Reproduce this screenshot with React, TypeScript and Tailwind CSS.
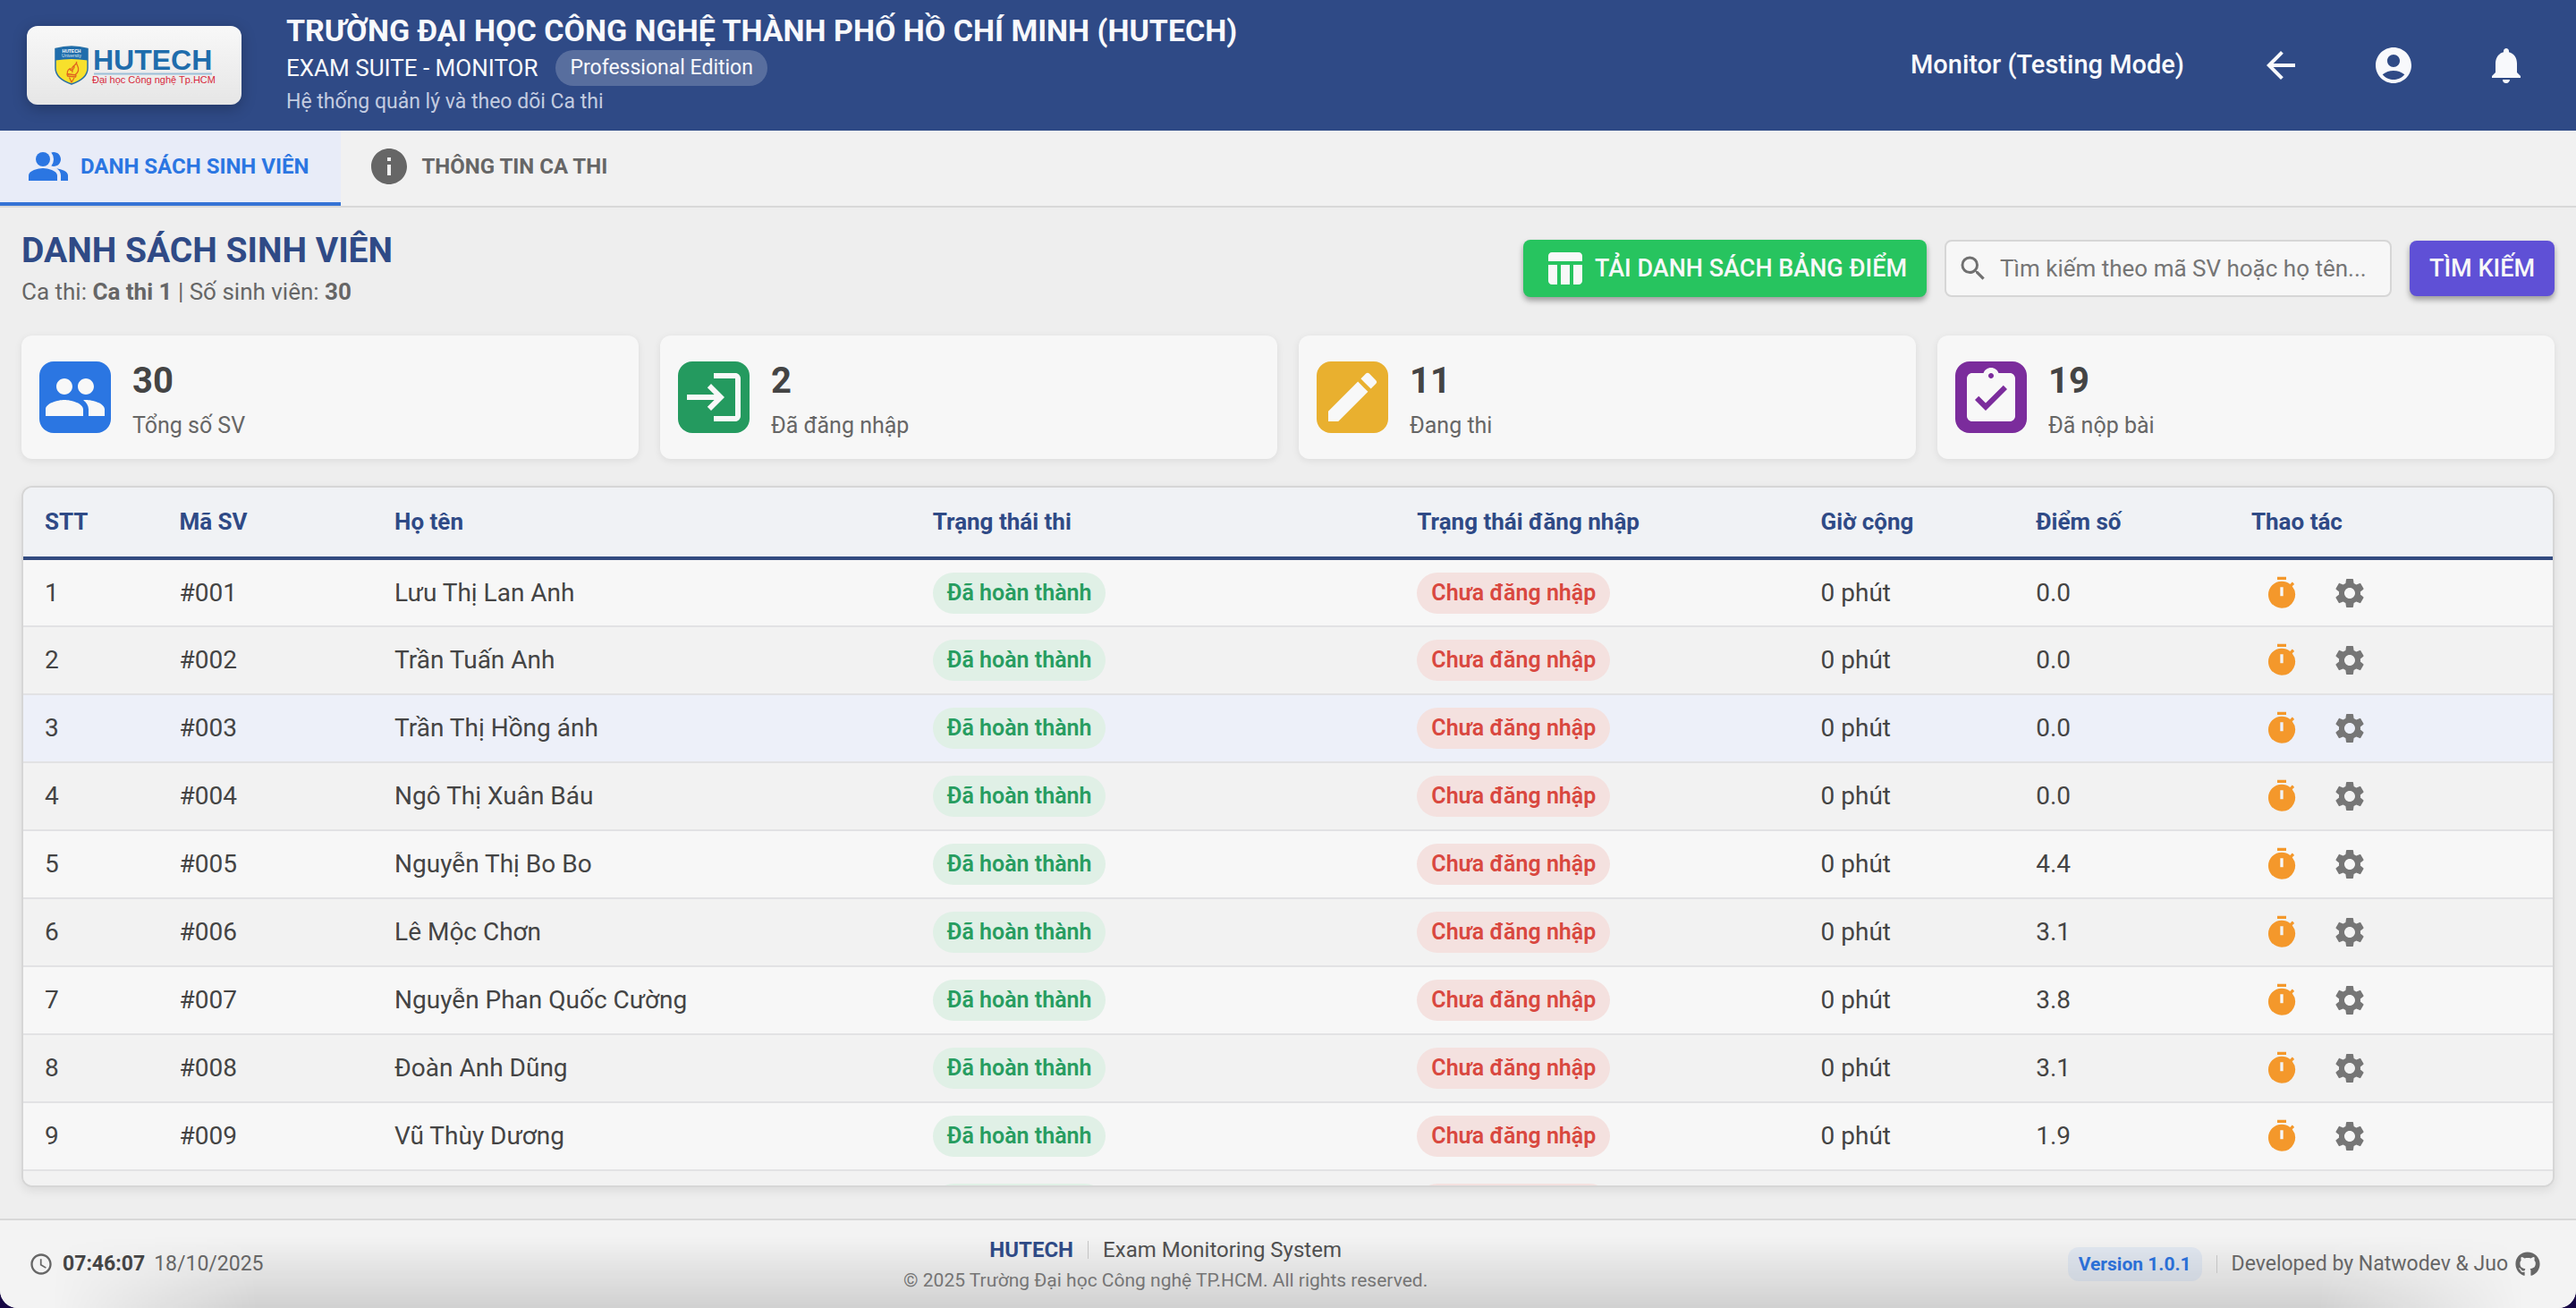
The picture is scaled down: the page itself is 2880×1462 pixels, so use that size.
import React from "react";
import {
  MdAccountCircle,
  MdArrowBack,
  MdAssignmentTurnedIn,
  MdEdit,
  MdInfo,
  MdLogin,
  MdNotifications,
  MdPeople,
  MdPeopleAlt,
  MdSchedule,
  MdSearch,
  MdSettings,
  MdTableChart,
  MdTimer,
} from "react-icons/md";
import { FaGithub } from "react-icons/fa";

type Student = { id: number; name: string; score: string };

const students: Student[] = [
  { id: 1, name: "Lưu Thị Lan Anh", score: "0.0" },
  { id: 2, name: "Trần Tuấn Anh", score: "0.0" },
  { id: 3, name: "Trần Thị Hồng ánh", score: "0.0" },
  { id: 4, name: "Ngô Thị Xuân Báu", score: "0.0" },
  { id: 5, name: "Nguyễn Thị Bo Bo", score: "4.4" },
  { id: 6, name: "Lê Mộc Chơn", score: "3.1" },
  { id: 7, name: "Nguyễn Phan Quốc Cường", score: "3.8" },
  { id: 8, name: "Đoàn Anh Dũng", score: "3.1" },
  { id: 9, name: "Vũ Thùy Dương", score: "1.9" },
  { id: 10, name: "", score: "" },
];

const columns = [
  { label: "STT", width: "w-[5%]" },
  { label: "Mã SV", width: "w-[8%]" },
  { label: "Họ tên", width: "w-[20%]" },
  { label: "Trạng thái thi", width: "w-[18%]" },
  { label: "Trạng thái đăng nhập", width: "w-[15%]" },
  { label: "Giờ cộng", width: "w-[8%]" },
  { label: "Điểm số", width: "w-[8%]" },
  { label: "Thao tác", width: "w-[12%]" },
];

const stats = [
  { value: 30, label: "Tổng số SV", color: "bg-[#2b76e2]", Icon: MdPeople },
  { value: 2, label: "Đã đăng nhập", color: "bg-[#249a5f]", Icon: MdLogin },
  { value: 11, label: "Đang thi", color: "bg-[#e9b02f]", Icon: MdEdit },
  { value: 19, label: "Đã nộp bài", color: "bg-[#7b2c9c]", Icon: MdAssignmentTurnedIn },
];

function Logo() {
  return (
    <div className="flex h-[88px] w-[240px] items-center justify-center rounded-xl bg-linear-to-b from-[#f8f8f8] to-[#e6e6e6] shadow-[0_4px_16px_rgba(0,0,0,0.25)]">
      <svg
        viewBox="0 0 178 44"
        className="h-11 w-[178px] overflow-visible"
        role="img"
        aria-label="HUTECH - Đại học Công nghệ Tp.HCM"
      >
        <path d="M1 3.500Q19-1.500 37 3.500V25Q37 37 19 43Q1 37 1 25Z" fill="#f7e02c" stroke="#2a6fa3" strokeWidth="1.500" />
        <path d="M1 3.500Q19-1.500 37 3.500V16.500Q19 13.500 1 16.500Z" fill="#1f6dac" />
        <text x="19" y="8" textAnchor="middle" fontFamily="Liberation Sans, sans-serif" fontWeight="700" fontSize="5" fill="#fff">HUTECH</text>
        <text x="19" y="13" textAnchor="middle" fontFamily="Liberation Sans, sans-serif" fontSize="5" fill="#dbe8f3">University</text>
        <path d="M24.500 18c1.500 3-5.500 4.500-5.500 8.500 0 2-2.500 1-1.500-1-3 1.500-4.500 5-2 7.500M24.500 18c-1 3 3.500 5.500 2 10-.5 2-2 3.500-3.500 4.500M22 23c1 2.500-3.500 3.500-2 7M14 31.500l10 1.500-.5 2-9-1zM16.500 35.500l2.500 5.500 3-5" fill="none" stroke="#e0661f" strokeWidth="1.300" strokeLinejoin="round" />
        <text x="43" y="27" fontFamily="Liberation Sans, sans-serif" fontWeight="700" fontSize="32" fill="#1f6dac">HUTECH</text>
        <rect x="44" y="30.500" width="132" height="2" fill="#9dbfd8" />
        <text x="42" y="41.500" fontFamily="Liberation Sans, sans-serif" fontSize="11" fill="#d8283a">Đại học Công nghệ Tp.HCM</text>
      </svg>
    </div>
  );
}

function Header() {
  return (
    <header className="flex h-[146px] shrink-0 items-center justify-between bg-[#2f4a86] px-[30px] text-[#f8f9fc]">
      <div className="flex items-center gap-[50px]">
        <Logo />
        <div className="flex flex-col pb-0.5">
          <h1 className="text-[34px] leading-[44px] font-bold">
            TRƯỜNG ĐẠI HỌC CÔNG NGHỆ THÀNH PHỐ HỒ CHÍ MINH (HUTECH)
          </h1>
          <div className="flex items-center gap-5">
            <span className="text-[26px]">EXAM SUITE - MONITOR</span>
            <span className="rounded-full bg-white/20 px-4 text-[23px] leading-[40px]">Professional Edition</span>
          </div>
          <p className="text-[23px] leading-9 text-[#c3cce0]">Hệ thống quản lý và theo dõi Ca thi</p>
        </div>
      </div>
      <div className="flex items-center gap-[30px]">
        <span className="mr-[30px] text-[29px] font-medium">Monitor (Testing Mode)</span>
        <button type="button" aria-label="Quay lại" className="p-6">
          <MdArrowBack className="size-12" />
        </button>
        <button type="button" aria-label="Tài khoản" className="p-6">
          <MdAccountCircle className="size-12" />
        </button>
        <button type="button" aria-label="Thông báo" className="p-6">
          <MdNotifications className="size-12" />
        </button>
      </div>
    </header>
  );
}

function Tabs() {
  return (
    <nav role="tablist" className="flex h-[86px] shrink-0 border-b-2 border-[#d8d8d8] bg-[#f1f1f1] text-2xl font-bold">
      <button
        type="button"
        role="tab"
        aria-selected="true"
        className="flex items-center gap-3 border-b-4 border-[#3573d5] bg-[#e8ecf8] pr-9 pl-[30px] text-[#2b76e2]"
      >
        <MdPeopleAlt className="size-12" />
        DANH SÁCH SINH VIÊN
      </button>
      <button
        type="button"
        role="tab"
        aria-selected="false"
        className="flex items-center gap-3 border-b-4 border-transparent pr-9 pl-[30px] text-[#666666]"
      >
        <MdInfo className="size-12" />
        THÔNG TIN CA THI
      </button>
    </nav>
  );
}

function Toolbar() {
  return (
    <div className="flex items-center justify-between">
      <div>
        <h2 className="text-[39px] leading-[48px] font-bold text-[#2f4a86]">DANH SÁCH SINH VIÊN</h2>
        <p className="mt-1 text-[26px] leading-9 text-[#666666]">
          Ca thi: <b>Ca thi 1</b> | Số sinh viên: <b>30</b>
        </p>
      </div>
      <form className="flex items-center gap-5" onSubmit={(e) => e.preventDefault()}>
        <button
          type="button"
          className="flex h-16 items-center gap-[10px] rounded-lg bg-[#27c45f] px-[22px] text-[27px] font-medium text-[#f8f8f8] shadow-[0_4px_6px_rgba(0,0,0,0.35)]"
        >
          <MdTableChart className="size-12" />
          TẢI DANH SÁCH BẢNG ĐIỂM
        </button>
        <label className="flex h-16 w-[500px] items-center gap-3 rounded-lg border-2 border-[#d6d6d6] bg-[#f7f7f7] px-3">
          <MdSearch className="size-9 shrink-0 text-[#707070]" />
          <input
            type="text"
            aria-label="Tìm kiếm"
            placeholder="Tìm kiếm theo mã SV hoặc họ tên..."
            className="min-w-0 flex-1 bg-transparent text-[26px] text-[#444444] outline-none placeholder:text-[#757575]"
          />
        </label>
        <button
          type="submit"
          className="h-[62px] rounded-lg bg-[#5f50d6] px-[22px] text-[27px] font-medium text-[#f8f8f8] shadow-[0_4px_6px_rgba(0,0,0,0.35)]"
        >
          TÌM KIẾM
        </button>
      </form>
    </div>
  );
}

function StatCards() {
  return (
    <section className="grid grid-cols-4 gap-6">
      {stats.map(({ value, label, color, Icon }) => (
        <article
          key={label}
          className="flex h-[138px] items-center gap-6 rounded-xl bg-[#f7f7f7] px-5 shadow-[0_2px_8px_rgba(0,0,0,0.08)]"
        >
          <div className={`flex size-20 items-center justify-center rounded-2xl text-[#f8f8f8] ${color}`}>
            <Icon className="size-[72px]" />
          </div>
          <div className="flex flex-col gap-2 pt-2">
            <strong className="text-[40px] leading-[48px] text-[#444444]">{value}</strong>
            <span className="text-[25px] leading-9 text-[#666666]">{label}</span>
          </div>
        </article>
      ))}
    </section>
  );
}

function Chip({ tone, children }: { tone: string; children: React.ReactNode }) {
  return (
    <span className={`inline-flex h-[46px] items-center rounded-full px-4 text-[25px] font-semibold ${tone}`}>
      {children}
    </span>
  );
}

function StudentTable() {
  return (
    <section className="min-h-0 flex-1 overflow-hidden rounded-xl border-2 border-[#d6d6d6] bg-[#f2f2f2] shadow-[0_4px_12px_rgba(0,0,0,0.08)]">
      <table className="w-full table-fixed border-collapse text-left text-[#444444]">
        <thead>
          <tr className="h-[79px] border-b-4 border-[#334b80] bg-[#f0f2f5] text-[26px] text-[#2f4a86]">
            {columns.map((c) => (
              <th key={c.label} scope="col" className={`px-6 font-bold ${c.width}`}>
                {c.label}
              </th>
            ))}
          </tr>
        </thead>
        <tbody>
          {students.map(({ id, name, score }) => (
            <tr
              key={id}
              className={`h-[76px] border-b-2 border-[#e2e2e4] text-[28px] ${
                id === 3 ? "bg-[#edf0f9]" : id % 2 ? "bg-[#f7f7f7]" : "bg-[#f2f2f2]"
              }`}
            >
              <td className="px-6">{id}</td>
              <td className="px-6">#{String(id).padStart(3, "0")}</td>
              <td className="px-6">{name}</td>
              <td className="px-6">
                <Chip tone="bg-[#e0f0e6] text-[#279d60]">Đã hoàn thành</Chip>
              </td>
              <td className="px-6">
                <Chip tone="bg-[#f4e1df] text-[#d9483f]">Chưa đăng nhập</Chip>
              </td>
              <td className="px-6">0 phút</td>
              <td className="px-6">{score}</td>
              <td className="px-6">
                <div className="flex gap-2">
                  <button type="button" aria-label="Cộng giờ" className="px-[14px] text-[#f4982b]">
                    <MdTimer className="size-10" />
                  </button>
                  <button type="button" aria-label="Cài đặt" className="px-[14px] text-[#767676]">
                    <MdSettings className="size-10" />
                  </button>
                </div>
              </td>
            </tr>
          ))}
        </tbody>
      </table>
    </section>
  );
}

function Footer() {
  return (
    <footer className="relative flex h-[100px] shrink-0 items-center justify-between border-t-2 border-[#d8d8d8] bg-[#f3f3f3] px-8 text-[23px] text-[#666666]">
      <div className="absolute inset-x-0 bottom-0 h-20 bg-linear-to-b from-transparent to-black/14 [mask-image:linear-gradient(to_right,transparent_2%,black_10%,black_90%,transparent_98%)]" />
      <div className="relative flex items-center gap-[10px]">
        <MdSchedule className="size-7" />
        <b className="text-[#444444]">07:46:07</b>
        <span>18/10/2025</span>
      </div>
      <div className="relative flex flex-col items-center">
        <div className="flex items-center gap-4 text-2xl leading-9 text-[#505050]">
          <b className="text-[#2f4a86]">HUTECH</b>
          <span className="h-5 w-px bg-[#c4c4c4]" />
          <span>Exam Monitoring System</span>
        </div>
        <p className="text-[21px] leading-8 text-[#757575]">
          © 2025 Trường Đại học Công nghệ TP.HCM. All rights reserved.
        </p>
      </div>
      <div className="relative flex items-center">
        <span className="rounded-xl bg-[#2b76e2]/8 px-3 text-[21px] leading-[38px] font-bold text-[#2b6fd6]">
          Version 1.0.1
        </span>
        <span className="mx-4 h-5 w-px bg-[#c4c4c4]" />
        <span>Developed by Natwodev &amp; Juo</span>
        <a href="#github" aria-label="GitHub" className="mr-1 ml-1 p-1">
          <FaGithub className="size-7" />
        </a>
      </div>
    </footer>
  );
}

export default function App() {
  return (
    <div className="h-screen bg-[#160745]">
      <div className="flex h-full flex-col overflow-hidden rounded-b-[20px] bg-[#eeeeee] font-['Roboto','Noto_Sans',sans-serif]">
        <Header />
        <Tabs />
        <main className="flex min-h-0 flex-1 flex-col px-6 pt-6 pb-[35px]">
          <Toolbar />
          <div className="mt-[31px] mb-[30px]">
            <StatCards />
          </div>
          <StudentTable />
        </main>
        <Footer />
      </div>
    </div>
  );
}
